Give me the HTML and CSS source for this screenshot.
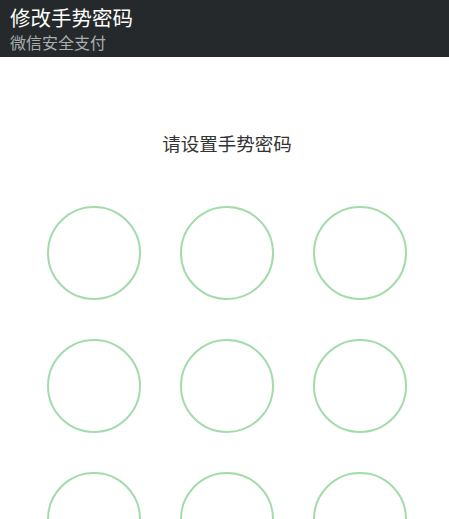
FILE: index.html
```html
<!DOCTYPE html>
<html lang="zh">
<head>
<meta charset="utf-8">
<link rel="stylesheet" href="styles.css">
</head>
<body>
<header class="bar">
  <div class="bar-title">修改手势密码</div>
  <div class="bar-sub">微信安全支付</div>
</header>
<main class="content">
  <div class="prompt">请设置手势密码</div>
  <div class="pad">
    <div class="dot"></div><div class="dot"></div><div class="dot"></div>
    <div class="dot"></div><div class="dot"></div><div class="dot"></div>
    <div class="dot"></div><div class="dot"></div><div class="dot"></div>
  </div>
</main>
</body>
</html>
```
FILE: styles.css
```css
html, body {
  margin: 0;
  padding: 0;
  background: #ffffff;
  font-family: "Noto Sans CJK SC", "Noto Sans", sans-serif;
  overflow: hidden;
}
.bar {
  height: 57px;
  background: #25292b;
  padding: 3px 0 0 10px;
  box-sizing: border-box;
}
.bar-title {
  color: #ffffff;
  font-size: 20.5px;
  line-height: 29px;
}
.bar-sub {
  color: #a9adaf;
  font-size: 16px;
  line-height: 21px;
}
.content {
  display: flex;
  flex-direction: column;
  align-items: center;
  padding-left: 5px;
}
.prompt {
  margin-top: 74px;
  font-size: 18.5px;
  line-height: 24px;
  color: #333333;
}
.pad {
  margin-top: 51px;
  display: grid;
  grid-template-columns: repeat(3, 94px);
  grid-auto-rows: 94px;
  gap: 39px;
}
.dot {
  border: 2px solid #a3dcab;
  border-radius: 50%;
  box-sizing: border-box;
}
```
